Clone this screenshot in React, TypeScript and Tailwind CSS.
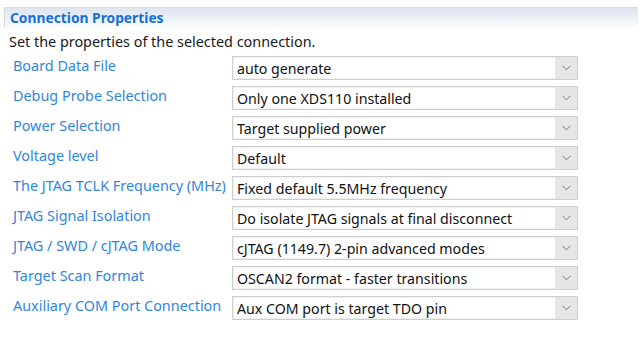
import React from "react";

const rows: [string, string][] = [
  ["Board Data File", "auto generate"],
  ["Debug Probe Selection", "Only one XDS110 installed"],
  ["Power Selection", "Target supplied power"],
  ["Voltage level", "Default"],
  ["The JTAG TCLK Frequency (MHz)", "Fixed default 5.5MHz frequency"],
  ["JTAG Signal Isolation", "Do isolate JTAG signals at final disconnect"],
  ["JTAG / SWD / cJTAG Mode", "cJTAG (1149.7) 2-pin advanced modes"],
  ["Target Scan Format", "OSCAN2 format - faster transitions"],
  ["Auxiliary COM Port Connection", "Aux COM port is target TDO pin"],
];

export default function App() {
  return (
    <div
      className="w-[640px] h-[354px] bg-white overflow-hidden"
      style={{ fontFamily: '"Noto Sans", "Open Sans", sans-serif' }}
    >
      <div className="pt-[7px] pl-[4px] pr-[2px]">
        <div className="h-[21px] border-t border-l border-[#d5dde8] bg-gradient-to-b from-[#dde5f0] to-[#fbfcfe] pl-[5px] flex items-center">
          <span className="text-[13.8px] font-bold text-[#1470d8] leading-none">Connection Properties</span>
        </div>
      </div>
      <div className="pl-[9px] pt-[4px] text-[14.4px] leading-[20px] text-[#1a1a1a]">
        Set the properties of the selected connection.
      </div>
      <div className="pl-[13px] pt-[4px] grid grid-cols-[219px_346px] gap-y-[6px]">
        {rows.map(([label, value]) => (
          <React.Fragment key={label}>
            <div className="text-[14.4px] leading-[20px] text-[#2f86dd] whitespace-nowrap">{label}</div>
            <div className="h-[24px] border border-[#cfcfcf] flex items-stretch bg-white shadow-[inset_0_0_0_1px_#f0f0f0]">
              <div className="flex-1 pl-[4px] pt-[1px] flex items-center text-[14.2px] text-[#111] whitespace-nowrap overflow-hidden">
                {value}
              </div>
              <div className="w-[22px] bg-[#e6e6e6] flex items-center justify-center">
                <svg width="9" height="6" viewBox="0 0 9 6" fill="none">
                  <path d="M0.5 0.8 L4.5 4.8 L8.5 0.8" stroke="#7a7a7a" strokeWidth="1" />
                </svg>
              </div>
            </div>
          </React.Fragment>
        ))}
      </div>
    </div>
  );
}
